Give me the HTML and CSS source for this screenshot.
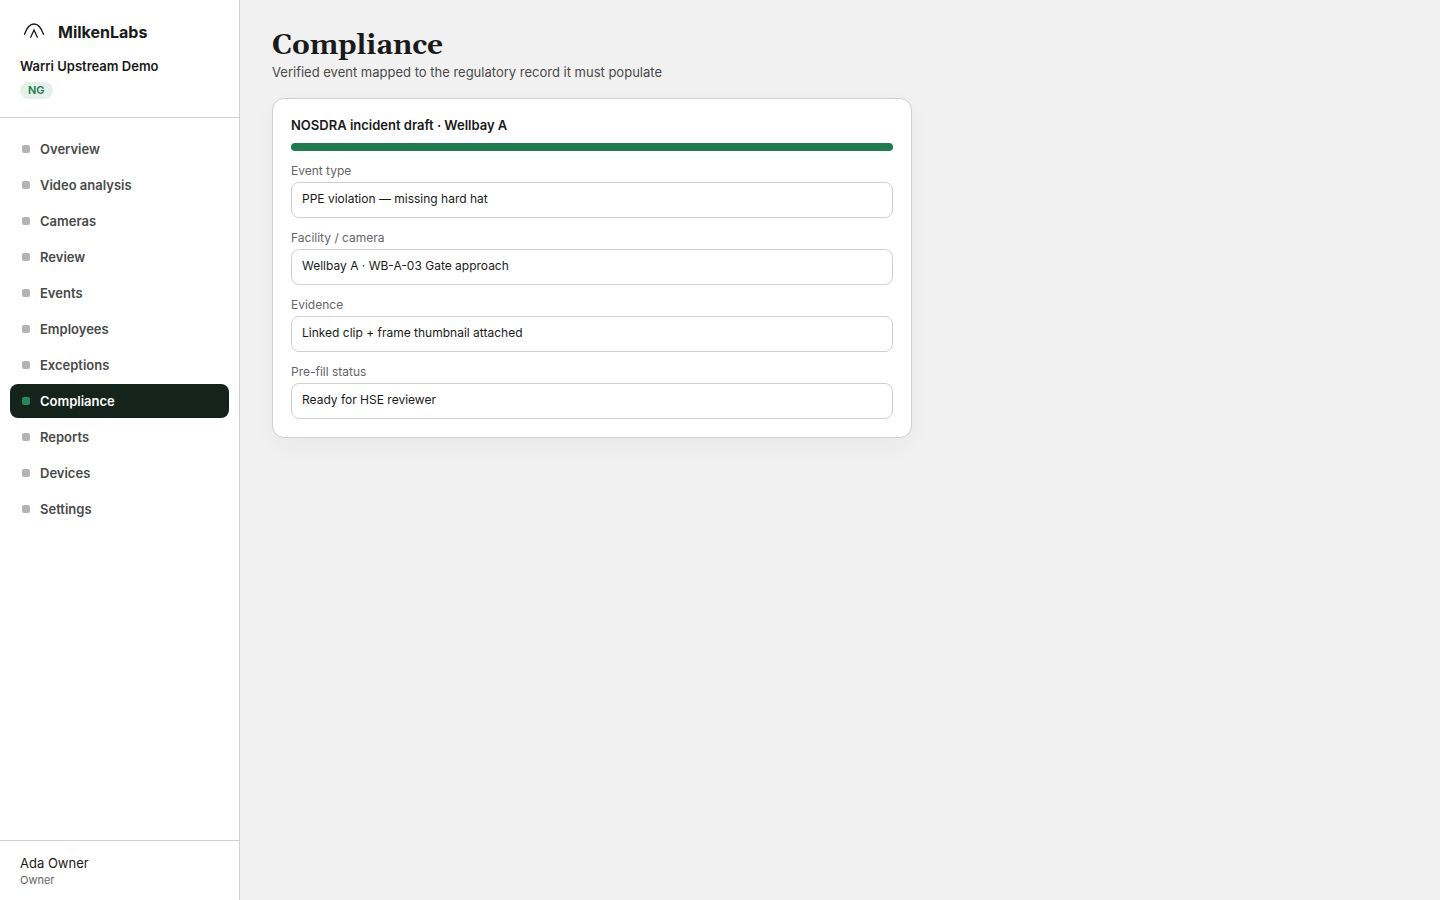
FILE: index.html
```html
<!DOCTYPE html>
<html lang="en">
<head>
    <meta charset="UTF-8">
    <meta name="viewport" content="width=device-width, initial-scale=1.0">
    <title>Compliance - MilkenLabs</title>
    <link rel="stylesheet" href="styles.css">
</head>
<body>
    <div class="app">
        <aside class="sidebar">
            <div class="sidebar-head">
                <div class="brand">
                    <svg class="brand-logo" viewBox="0 0 28 28" fill="none" stroke="currentColor" stroke-width="1.3" stroke-linecap="round" aria-hidden="true">
                        <path d="M4.5 16.3C6.5 10.5 9.800 6 14 6s7.500 4.500 9.500 10.300"/>
                        <path d="M10.700 19.300L14 12l3.300 7.300"/>
                    </svg>
                    <span class="brand-name">MilkenLabs</span>
                </div>
                <div class="tenant">Warri Upstream Demo</div>
                <span class="badge">NG</span>
            </div>
            <nav class="nav">
                <a class="nav-link" href="#overview">Overview</a>
                <a class="nav-link" href="#video">Video analysis</a>
                <a class="nav-link" href="#cameras">Cameras</a>
                <a class="nav-link" href="#review">Review</a>
                <a class="nav-link" href="#events">Events</a>
                <a class="nav-link" href="#employees">Employees</a>
                <a class="nav-link" href="#exceptions">Exceptions</a>
                <a class="nav-link active" href="#compliance" aria-current="page">Compliance</a>
                <a class="nav-link" href="#reports">Reports</a>
                <a class="nav-link" href="#devices">Devices</a>
                <a class="nav-link" href="#settings">Settings</a>
            </nav>
            <div class="sidebar-foot">
                <div class="user-name">Ada Owner</div>
                <div class="user-role">Owner</div>
            </div>
        </aside>

        <main class="main">
            <h1>Compliance</h1>
            <p class="subtitle">Verified event mapped to the regulatory record it must populate</p>

            <form class="card">
                <h2>NOSDRA incident draft · Wellbay A</h2>
                <div class="progress"></div>
                <div class="field">
                    <label for="event-type">Event type</label>
                    <input type="text" id="event-type" value="PPE violation — missing hard hat">
                </div>
                <div class="field">
                    <label for="facility">Facility / camera</label>
                    <input type="text" id="facility" value="Wellbay A · WB-A-03 Gate approach">
                </div>
                <div class="field">
                    <label for="evidence">Evidence</label>
                    <input type="text" id="evidence" value="Linked clip + frame thumbnail attached">
                </div>
                <div class="field">
                    <label for="status">Pre-fill status</label>
                    <input type="text" id="status" value="Ready for HSE reviewer">
                </div>
            </form>
        </main>
    </div>
</body>
</html>
```
FILE: styles.css
```css
* {
    margin: 0;
    padding: 0;
    box-sizing: border-box;
}

body {
    font-family: 'Inter', sans-serif;
    font-size: 13px;
    line-height: 20px;
    background-color: #f1f1f1;
    color: #1a1a1a;
}

.app {
    display: flex;
    min-height: 100vh;
}

/* Sidebar */
.sidebar {
    display: flex;
    flex-direction: column;
    flex: 0 0 240px;
    background-color: #fff;
    border-right: 1px solid #d0d0d0;
}

.sidebar-head {
    padding: 18px 20px;
    border-bottom: 1px solid #d0d0d0;
}

.brand {
    display: flex;
    align-items: center;
    gap: 10px;
    margin-bottom: 10px;
}

.brand-logo {
    width: 28px;
    height: 28px;
}

.brand-name {
    font-size: 16px;
    font-weight: 700;
}

.tenant {
    font-weight: 600;
    margin-bottom: 6px;
}

.badge {
    display: block;
    width: fit-content;
    padding: 0 8px;
    border-radius: 9px;
    background-color: #e3f1ea;
    color: #1f7a4f;
    font-size: 11px;
    font-weight: 600;
    line-height: 17px;
}

.nav {
    display: flex;
    flex-direction: column;
    gap: 2px;
    flex: 1;
    padding: 14px 10px;
}

.nav-link {
    display: flex;
    align-items: center;
    gap: 10px;
    padding: 7px 12px;
    border-radius: 8px;
    color: #4a4a4a;
    font-weight: 600;
    text-decoration: none;
}

.nav-link::before {
    content: '';
    width: 8px;
    height: 8px;
    border-radius: 2px;
    background-color: #b4b4b4;
}

.nav-link.active {
    background-color: #14231c;
    color: #fff;
}

.nav-link.active::before {
    background-color: #27895a;
}

.sidebar-foot {
    padding: 12px 20px;
    border-top: 1px solid #d0d0d0;
}

.user-role {
    color: #666;
    font-size: 11px;
    line-height: 15px;
}

/* Main */
.main {
    flex: 1;
    padding: 30px 32px;
}

h1 {
    font-family: 'Gelasio', Georgia, 'Liberation Serif', serif;
    font-size: 28px;
    font-weight: 700;
    line-height: 32px;
}

.subtitle {
    color: #4a4a4a;
    margin-bottom: 16px;
}

.card {
    max-width: 640px;
    padding: 18px;
    background-color: #fff;
    border: 1px solid #d0d0d0;
    border-radius: 12px;
    box-shadow: 0 8px 24px rgba(0, 0, 0, 0.04);
}

h2 {
    font-size: 13px;
    font-weight: 600;
    line-height: 16px;
}

.progress {
    height: 8px;
    margin: 10px 0;
    border-radius: 4px;
    background-color: #1f7a4f;
}

.field + .field {
    margin-top: 10px;
}

.field label {
    display: block;
    color: #666;
    font-size: 12px;
    margin-bottom: 1px;
}

.field input {
    display: block;
    width: 100%;
    height: 36px;
    padding: 0 10px 3px;
    border: 1px solid #d0d0d0;
    border-radius: 8px;
    background-color: #fff;
    color: #1a1a1a;
    font-family: inherit;
    font-size: 12px;
}
```
